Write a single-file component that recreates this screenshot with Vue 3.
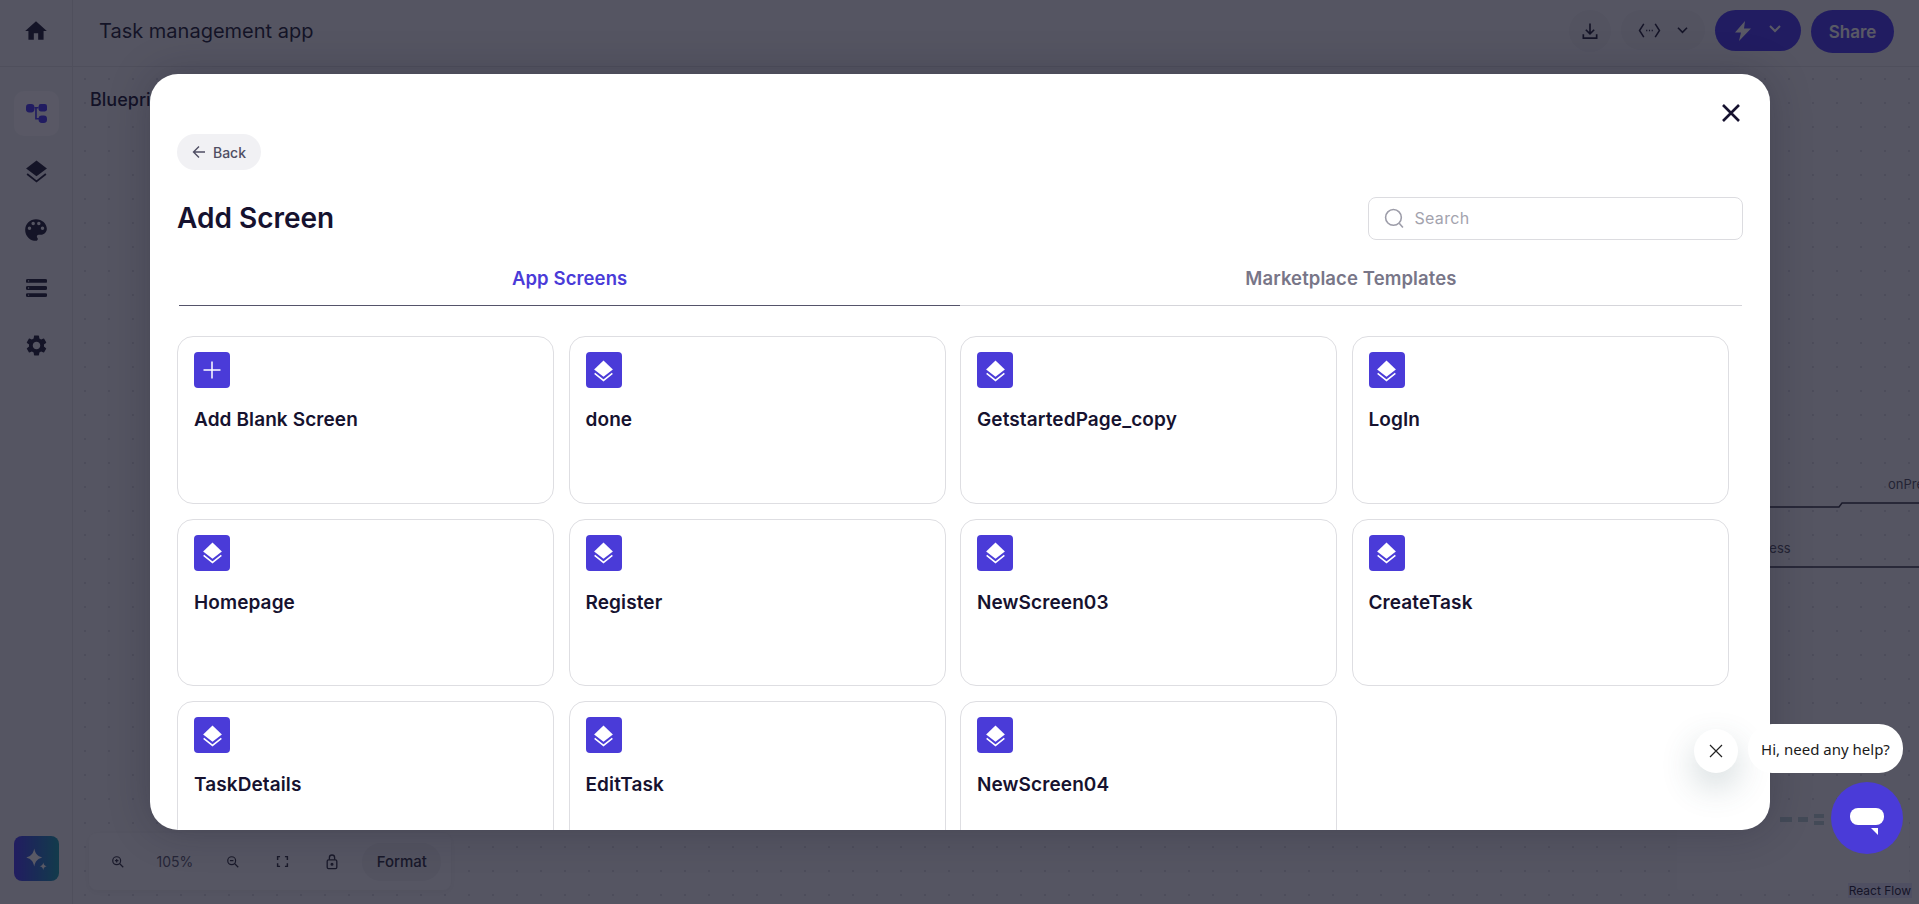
<template>
  <div class="page">
    <aside class="rail">
      <div class="rail-top">
        <svg class="rail-home" viewBox="0 0 24 24"><path d="M10 20v-6h4v6h5v-8h3L12 3 2 12h3v8z" /></svg>
      </div>
      <nav class="rail-nav">
        <button class="rail-btn active">
          <svg viewBox="0 0 20 18" width="21" height="19">
            <rect x="0" y="0" width="8" height="8" rx="3" fill="#4535f0" />
            <rect x="12" y="0" width="8" height="7" rx="2" fill="#4535f0" />
            <rect x="12" y="11" width="8" height="7" rx="3" fill="#4535f0" />
            <path d="M8 3.5h4M9.5 3.5v10.5h3" fill="none" stroke="#4535f0" stroke-width="1.6" />
          </svg>
        </button>
        <button class="rail-btn">
          <svg viewBox="0 0 24 24" width="25" height="25">
            <path d="M12 1.5 22 9l-10 7.5L2 9z" fill="#1a1830" />
            <path d="M3 14.5l9 7 9-7" fill="none" stroke="#1a1830" stroke-width="1.8" />
          </svg>
        </button>
        <button class="rail-btn">
          <svg viewBox="0 0 24 24" width="26" height="26">
            <path fill="#1a1830" fill-rule="evenodd" d="M12 2a10 10 0 0 0 0 20c.92 0 1.67-.74 1.67-1.67 0-.43-.17-.82-.43-1.12-.26-.29-.42-.68-.42-1.1 0-.92.74-1.67 1.67-1.67h1.95c3.06 0 5.56-2.49 5.56-5.55C22 5.98 17.52 2 12 2zM6 12a1.6 1.6 0 1 1 0-3.2A1.6 1.6 0 0 1 6 12zm3.4-4.4a1.6 1.6 0 1 1 0-3.2 1.6 1.6 0 0 1 0 3.2zm5.2 0a1.6 1.6 0 1 1 0-3.2 1.6 1.6 0 0 1 0 3.2zM18 12a1.6 1.6 0 1 1 0-3.2 1.6 1.6 0 0 1 0 3.2z" />
          </svg>
        </button>
        <button class="rail-btn">
          <svg viewBox="0 0 20 17" width="21" height="18">
            <path fill="#1a1830" fill-rule="evenodd" d="M1.5 0h17a1.5 1.5 0 0 1 0 3.6h-17a1.5 1.5 0 0 1 0-3.6zm1 1.2a.6.6 0 1 0 0 1.2.6.6 0 0 0 0-1.2zM1.5 6.700h17a1.5 1.5 0 0 1 0 3.6h-17a1.5 1.5 0 0 1 0-3.6zm1 1.2a.6.6 0 1 0 0 1.2.6.6 0 0 0 0-1.2zM1.5 13.4h17a1.5 1.5 0 0 1 0 3.6h-17a1.5 1.5 0 0 1 0-3.6zm1 1.2a.6.6 0 1 0 0 1.2.6.6 0 0 0 0-1.2z" />
          </svg>
        </button>
        <button class="rail-btn">
          <svg viewBox="0 0 24 24" width="25" height="25">
            <path fill="#1a1830" d="M19.14 12.94c.04-.3.06-.61.06-.94 0-.32-.02-.64-.07-.94l2.03-1.58a.49.49 0 0 0 .12-.61l-1.92-3.32a.49.49 0 0 0-.59-.22l-2.39.96c-.5-.38-1.03-.7-1.62-.94l-.36-2.54a.48.48 0 0 0-.48-.41h-3.84c-.24 0-.43.17-.47.41l-.36 2.54c-.59.24-1.13.57-1.62.94l-2.39-.96c-.22-.08-.47 0-.59.22L2.74 8.87c-.12.21-.08.47.12.61l2.03 1.58c-.05.3-.09.63-.09.94s.02.64.07.94l-2.03 1.58a.49.49 0 0 0-.12.61l1.92 3.32c.12.22.37.29.59.22l2.39-.96c.5.38 1.03.7 1.62.94l.36 2.54c.05.24.24.41.48.41h3.84c.24 0 .44-.17.47-.41l.36-2.54c.59-.24 1.13-.56 1.62-.94l2.39.96c.22.08.47 0 .59-.22l1.92-3.32c.12-.22.07-.47-.12-.61l-2.01-1.58zM12 15.6c-1.98 0-3.6-1.62-3.6-3.6s1.62-3.6 3.6-3.6 3.6 1.62 3.6 3.6-1.62 3.6-3.6 3.6z" />
          </svg>
        </button>
      </nav>
      <button class="ai-btn">
        <svg viewBox="0 0 24 24" width="27" height="27">
          <path fill="#fff" d="M10 3c.9 4.6 2.6 6.6 7 8-4.4 1.4-6.1 3.4-7 8-.9-4.6-2.6-6.6-7-8 4.4-1.4 6.1-3.4 7-8z" />
          <path fill="#fff" d="M18 15.5c.4 2 1.1 2.8 3 3.4-1.9.6-2.6 1.4-3 3.4-.4-2-1.1-2.8-3-3.4 1.9-.6 2.6-1.4 3-3.4z" />
        </svg>
      </button>
    </aside>

    <div class="main">
      <header class="topbar">
        <span class="app-name">Task management app</span>
        <div class="top-actions">
          <button class="round-btn">
            <svg viewBox="0 0 24 24" width="20" height="20" fill="none" stroke="#1a1830" stroke-width="2">
              <path d="M12 3v12M7 10.5l5 5 5-5M4 16v4.5h16V16" />
            </svg>
          </button>
          <button class="code-btn">
            <svg viewBox="0 0 24 20" width="23" height="19" fill="none" stroke="#1a1830" stroke-width="1.6">
              <path d="M6 3 1.5 10 6 17M18 3l4.5 7L18 17" />
              <path d="M8.5 10h1.2M11.4 10h1.2M14.3 10h1.2" />
            </svg>
            <svg viewBox="0 0 14 10" width="13" height="9" fill="none" stroke="#1a1830" stroke-width="1.8"><path d="M2 2l5 5 5-5" /></svg>
          </button>
          <button class="bolt-btn">
            <svg viewBox="0 0 16 20" width="16" height="20"><path fill="#fff" d="M10 0 0 11.5h6L4 20l12-12.5H9z" /></svg>
            <svg class="bolt-chevron" viewBox="0 0 14 10" width="14" height="10" fill="none" stroke="#fff" stroke-width="2"><path d="M2 2l5 5 5-5" /></svg>
          </button>
          <button class="share-btn">Share</button>
        </div>
      </header>

      <section class="canvas">
        <h2 class="canvas-title">Blueprint</h2>
        <svg class="edges" viewBox="0 0 149 100" width="149" height="100" fill="none" stroke="#2c2c3c" stroke-width="1.5">
          <path d="M0 22h69l3-4h77" />
          <path d="M0 82h149" />
        </svg>
        <span class="edge-label press">onPress</span>
        <span class="edge-label success">onSuccess</span>

        <div class="flow-controls">
          <svg viewBox="0 0 16 16" width="14" height="14" fill="none" stroke="#2a2a3a" stroke-width="1.4"><circle cx="6.5" cy="6.5" r="4.5" /><path d="M10 10l4 4M4.5 6.5h4M6.5 4.5v4" /></svg>
          <span class="zoom-value">105%</span>
          <svg viewBox="0 0 16 16" width="14" height="14" fill="none" stroke="#2a2a3a" stroke-width="1.4"><circle cx="6.5" cy="6.5" r="4.5" /><path d="M10 10l4 4M4.5 6.5h4" /></svg>
          <svg viewBox="0 0 16 16" width="13" height="13" fill="none" stroke="#2a2a3a" stroke-width="1.8"><path d="M2 6V2h3M11 2h3v4M14 10v4h-3M5 14H2v-4" /></svg>
          <svg viewBox="0 0 16 18" width="14" height="16" fill="none" stroke="#2a2a3a" stroke-width="1.5"><rect x="2.5" y="6.5" width="11" height="10" rx="1.5" /><path d="M5 6.5V4a3 3 0 0 1 6 0v2.5" /><circle cx="8" cy="11.5" r="1" fill="#2a2a3a" /></svg>
          <button class="format-btn">Format</button>
        </div>

        <div class="minimap">
          <i class="mini-node wide"></i>
          <i class="mini-node"></i>
          <i class="mini-node stack"></i>
        </div>
        <span class="flow-credit">React Flow</span>
      </section>
    </div>

    <div class="overlay">
      <div class="modal">
        <button class="close-btn">
          <svg viewBox="0 0 20 20" width="20" height="20" fill="none" stroke="#16122f" stroke-width="2.6"><path d="M2 2l16 16M18 2 2 18" /></svg>
        </button>

        <button class="back-btn">
          <svg viewBox="0 0 14 14" width="14" height="14" fill="none" stroke="#4f4e63" stroke-width="1.4"><path d="M13 7H1.5M7 1.5 1.5 7 7 12.5" /></svg>
          Back
        </button>

        <div class="title-row">
          <h1>Add Screen</h1>
          <label class="search">
            <svg viewBox="0 0 20 20" width="21" height="21" fill="none" stroke="#9d9da9" stroke-width="1.5"><circle cx="9" cy="9" r="7.5" /><path d="M14.5 14.5l3.5 4" /></svg>
            <input type="text" placeholder="Search" />
          </label>
        </div>

        <div class="tabs">
          <div v-for="tab in tabs" :key="tab.label" class="tab" :class="{ current: tab.current }">{{ tab.label }}</div>
        </div>

        <div class="screens">
          <div v-for="screen in screens" :key="screen.name" class="screen-card">
            <div class="screen-icon">
              <svg v-if="screen.blank" viewBox="0 0 20 20" width="20" height="20" fill="none" stroke="#fff" stroke-width="1.5"><path d="M10 1.5v17M1.5 10h17" /></svg>
              <svg v-else viewBox="0 0 24 24" width="25" height="25">
                <path fill="#fff" d="M12 2.5 21 11l-9 7-9-7z" />
                <path d="M3.5 14.8 12 21.5l8.5-6.7" fill="none" stroke="#fff" stroke-width="1.5" />
              </svg>
            </div>
            <div class="screen-name">{{ screen.name }}</div>
          </div>
        </div>
      </div>
    </div>

    <div class="chat">
      <div class="chat-row">
        <button class="chat-close">
          <svg viewBox="0 0 16 16" width="16" height="16" fill="none" stroke="#222" stroke-width="1.2"><path d="M2 2l12 12M14 2 2 14" /></svg>
        </button>
        <div class="chat-bubble">Hi, need any help?</div>
      </div>
      <button class="chat-launcher">
        <svg viewBox="0 0 34 34" width="34" height="34">
          <rect x="0" y="7" width="34" height="17" rx="8" fill="#fff" />
          <path d="M21 27h7v7z" fill="#fff" />
        </svg>
      </button>
    </div>
  </div>
</template>

<script setup>
const tabs = [
  { label: "App Screens", current: true },
  { label: "Marketplace Templates", current: false },
];

const screens = [
  { name: "Add Blank Screen", blank: true },
  { name: "done" },
  { name: "GetstartedPage_copy" },
  { name: "LogIn" },
  { name: "Homepage" },
  { name: "Register" },
  { name: "NewScreen03" },
  { name: "CreateTask" },
  { name: "TaskDetails" },
  { name: "EditTask" },
  { name: "NewScreen04" },
];
</script>

<style>
html,
body {
  margin: 0;
  height: 100%;
  overflow: hidden;
}
</style>

<style scoped>
* {
  box-sizing: border-box;
}

button {
  border: none;
  padding: 0;
  background: none;
  font: inherit;
}

.page {
  position: relative;
  display: flex;
  width: 100%;
  height: 904px;
  overflow: hidden;
  background: #f2f2f5;
  font-family: Inter, "Noto Sans", sans-serif;
  color: #16122f;
}

/* left rail */
.rail {
  width: 73px;
  flex: none;
  display: flex;
  flex-direction: column;
  align-items: center;
  border-right: 1px solid #dcdce2;
  padding-bottom: 23px;
}

.rail-top {
  height: 67px;
  width: 100%;
  display: flex;
  align-items: center;
  justify-content: center;
  padding-bottom: 4px;
  border-bottom: 1px solid #dcdce2;
}

.rail-home {
  width: 26px;
  height: 26px;
  fill: #1a1830;
}

.rail-nav {
  flex: 1;
  display: flex;
  flex-direction: column;
  align-items: center;
  gap: 13px;
  padding-top: 24px;
}

.rail-btn {
  width: 45px;
  height: 45px;
  display: flex;
  align-items: center;
  justify-content: center;
  border-radius: 10px;
}

.rail-btn.active {
  background: #fdfcff;
}

.ai-btn {
  width: 45px;
  height: 45px;
  display: flex;
  align-items: center;
  justify-content: center;
  border-radius: 8px;
  background: linear-gradient(90deg, #4535f0, #129aa8);
}

.main {
  flex: 1;
  min-width: 0;
  display: flex;
  flex-direction: column;
}

/* top bar */
.topbar {
  height: 67px;
  flex: none;
  display: flex;
  align-items: flex-start;
  justify-content: space-between;
  padding: 10px 25px 0 26px;
  border-bottom: 1px solid #dcdce2;
}

.app-name {
  font-size: 20px;
  font-weight: 400;
  line-height: 42px;
  color: #1a1830;
}

.top-actions {
  display: flex;
  align-items: flex-start;
  gap: 10px;
}

.round-btn {
  width: 42px;
  height: 42px;
  display: flex;
  align-items: center;
  justify-content: center;
  border-radius: 50%;
  background: #e9e9ee;
}

.code-btn {
  width: 84px;
  height: 40px;
  display: flex;
  align-items: center;
  justify-content: center;
  gap: 15px;
  border-radius: 20px;
  background: #e9e9ee;
}

.bolt-btn {
  width: 86px;
  height: 41px;
  display: flex;
  align-items: center;
  justify-content: center;
  gap: 17px;
  border-radius: 21px;
  background: #4535f0;
}

.bolt-chevron {
  margin-top: -4px;
}

.share-btn {
  width: 83px;
  height: 43px;
  border-radius: 22px;
  background: #4535f0;
  color: #fff;
  font-size: 17px;
  font-weight: 600;
}

/* canvas */
.canvas {
  position: relative;
  flex: 1;
  background-image: radial-gradient(#d6d6de 1px, transparent 1.2px);
  background-size: 24px 24px;
}

.canvas-title {
  margin: 0;
  padding: 22px 0 0 17px;
  font-size: 18px;
  font-weight: 500;
  line-height: 22px;
}

.edges {
  position: absolute;
  right: 0;
  top: 418px;
}

.edge-label {
  position: absolute;
  font-size: 13px;
  color: #4b4b5a;
}

.edge-label.press {
  left: 1815px;
  top: 409px;
}

.edge-label.success {
  left: 1650px;
  top: 473px;
}

.flow-controls {
  position: absolute;
  left: 16px;
  bottom: 14px;
  width: 362px;
  height: 57px;
  display: flex;
  align-items: center;
  padding: 0 9px 0 22px;
  border-radius: 8px;
  background: #f4f4f7;
  box-shadow: 0 2px 8px rgba(0, 0, 0, 0.06);
}

.flow-controls > svg {
  flex: none;
}

.flow-controls > svg:nth-of-type(2) {
  margin-left: 33px;
}

.flow-controls > svg:nth-of-type(3) {
  margin-left: 36px;
}

.flow-controls > svg:nth-of-type(4) {
  margin-left: 36px;
}

.zoom-value {
  margin-left: 31.5px;
  font-size: 14px;
  color: #55556a;
}

.format-btn {
  margin-left: 23px;
  width: 79px;
  height: 38px;
  border-radius: 19px;
  background: #e9e9ee;
  font-size: 15px;
  font-weight: 500;
  color: #2a2a3a;
}

.minimap {
  position: absolute;
  right: 10px;
  bottom: 14px;
  width: 232px;
  height: 70px;
  display: flex;
  align-items: flex-start;
  justify-content: flex-end;
  gap: 6px;
  padding: 0 85px 0 0;
  border-radius: 2px;
  background: #f4f4f7;
}

.mini-node {
  width: 10px;
  height: 5px;
  margin-top: -3px;
  background: #b5ccd0;
}

.mini-node.wide {
  width: 12px;
}

.mini-node.stack {
  height: 4px;
  box-shadow: 0 7px 0 #b5ccd0;
  margin-top: -6px;
}

.flow-credit {
  position: absolute;
  right: 7px;
  bottom: 6px;
  padding: 0 1px;
  font-size: 12px;
  line-height: 15px;
  background: #dedcf5;
  color: #1a1830;
}

/* modal */
.overlay {
  position: absolute;
  inset: 0;
  display: flex;
  align-items: center;
  justify-content: center;
  background: rgba(18, 18, 36, 0.7);
}

.modal {
  position: relative;
  width: 1620px;
  height: 756px;
  padding: 0 27px 0 27.5px;
  overflow: hidden;
  border-radius: 28px;
  background: #fff;
  box-shadow: 0 0 40px rgba(20, 20, 40, 0.25);
}

.close-btn {
  position: absolute;
  top: 29px;
  right: 29px;
  width: 20px;
  height: 20px;
}

.back-btn {
  display: flex;
  align-items: center;
  gap: 7px;
  height: 36px;
  width: 84px;
  margin-top: 60px;
  justify-content: center;
  border-radius: 18px;
  background: #f1f1f4;
  color: #4f4e63;
  font-size: 14px;
  font-weight: 500;
}

.title-row {
  display: flex;
  align-items: center;
  justify-content: space-between;
  margin-top: 27px;
}

.title-row h1 {
  margin: 0;
  font-size: 28px;
  font-weight: 600;
  line-height: 43px;
  color: #16122f;
}

.search {
  width: 375px;
  height: 43px;
  display: flex;
  align-items: center;
  gap: 10px;
  padding: 0 15px;
  border: 1px solid #dcdce0;
  border-radius: 8px;
}

.search input {
  flex: 1;
  min-width: 0;
  border: none;
  outline: none;
  padding: 0 0 2px;
  font: inherit;
  font-size: 16px;
  letter-spacing: 0.3px;
}

.search input::placeholder {
  color: #a3a3ae;
}

.tabs {
  display: flex;
  margin: 12px 1px 0 2px;
}

.tab {
  flex: 1;
  height: 54px;
  display: flex;
  align-items: center;
  justify-content: center;
  padding-bottom: 1px;
  border-bottom: 1px solid #d5d5da;
  font-size: 18.5px;
  font-weight: 600;
  letter-spacing: 0.1px;
  color: #787688;
}

.tab.current {
  color: #4a3bd8;
  border-bottom-color: #55546a;
}

.screens {
  display: grid;
  grid-template-columns: repeat(4, 1fr);
  grid-auto-rows: 167.5px;
  gap: 15px 14.5px;
  margin-top: 30px;
  margin-right: 14px;
}

.screen-card {
  padding: 15px 16px;
  border: 1px solid #dedee2;
  border-radius: 16px;
  background: #fff;
}

.screen-icon {
  width: 36px;
  height: 36px;
  display: flex;
  align-items: center;
  justify-content: center;
  border-radius: 4px;
  background: #4a3bd8;
}

.screen-name {
  margin-top: 19px;
  font-size: 19px;
  font-weight: 600;
  letter-spacing: 0.1px;
  line-height: 26px;
  color: #16122f;
}

/* chat widget */
.chat {
  position: absolute;
  right: 16px;
  bottom: 50px;
  display: flex;
  flex-direction: column;
  align-items: flex-end;
  gap: 9px;
}

.chat-row {
  display: flex;
  align-items: flex-end;
  gap: 10px;
}

.chat-close {
  width: 44px;
  height: 44px;
  display: flex;
  align-items: center;
  justify-content: center;
  border-radius: 50%;
  background: #fff;
  box-shadow: 0 14px 34px rgba(60, 90, 100, 0.24);
}

.chat-bubble {
  width: 155px;
  height: 49px;
  display: flex;
  align-items: center;
  justify-content: center;
  border-radius: 24px;
  background: #fff;
  color: #1a1a1a;
  font-family: "Noto Sans", sans-serif;
  font-size: 15px;
}

.chat-launcher {
  width: 72px;
  height: 72px;
  display: flex;
  align-items: center;
  justify-content: center;
  border-radius: 50%;
  background: #4a3bd8;
}
</style>
